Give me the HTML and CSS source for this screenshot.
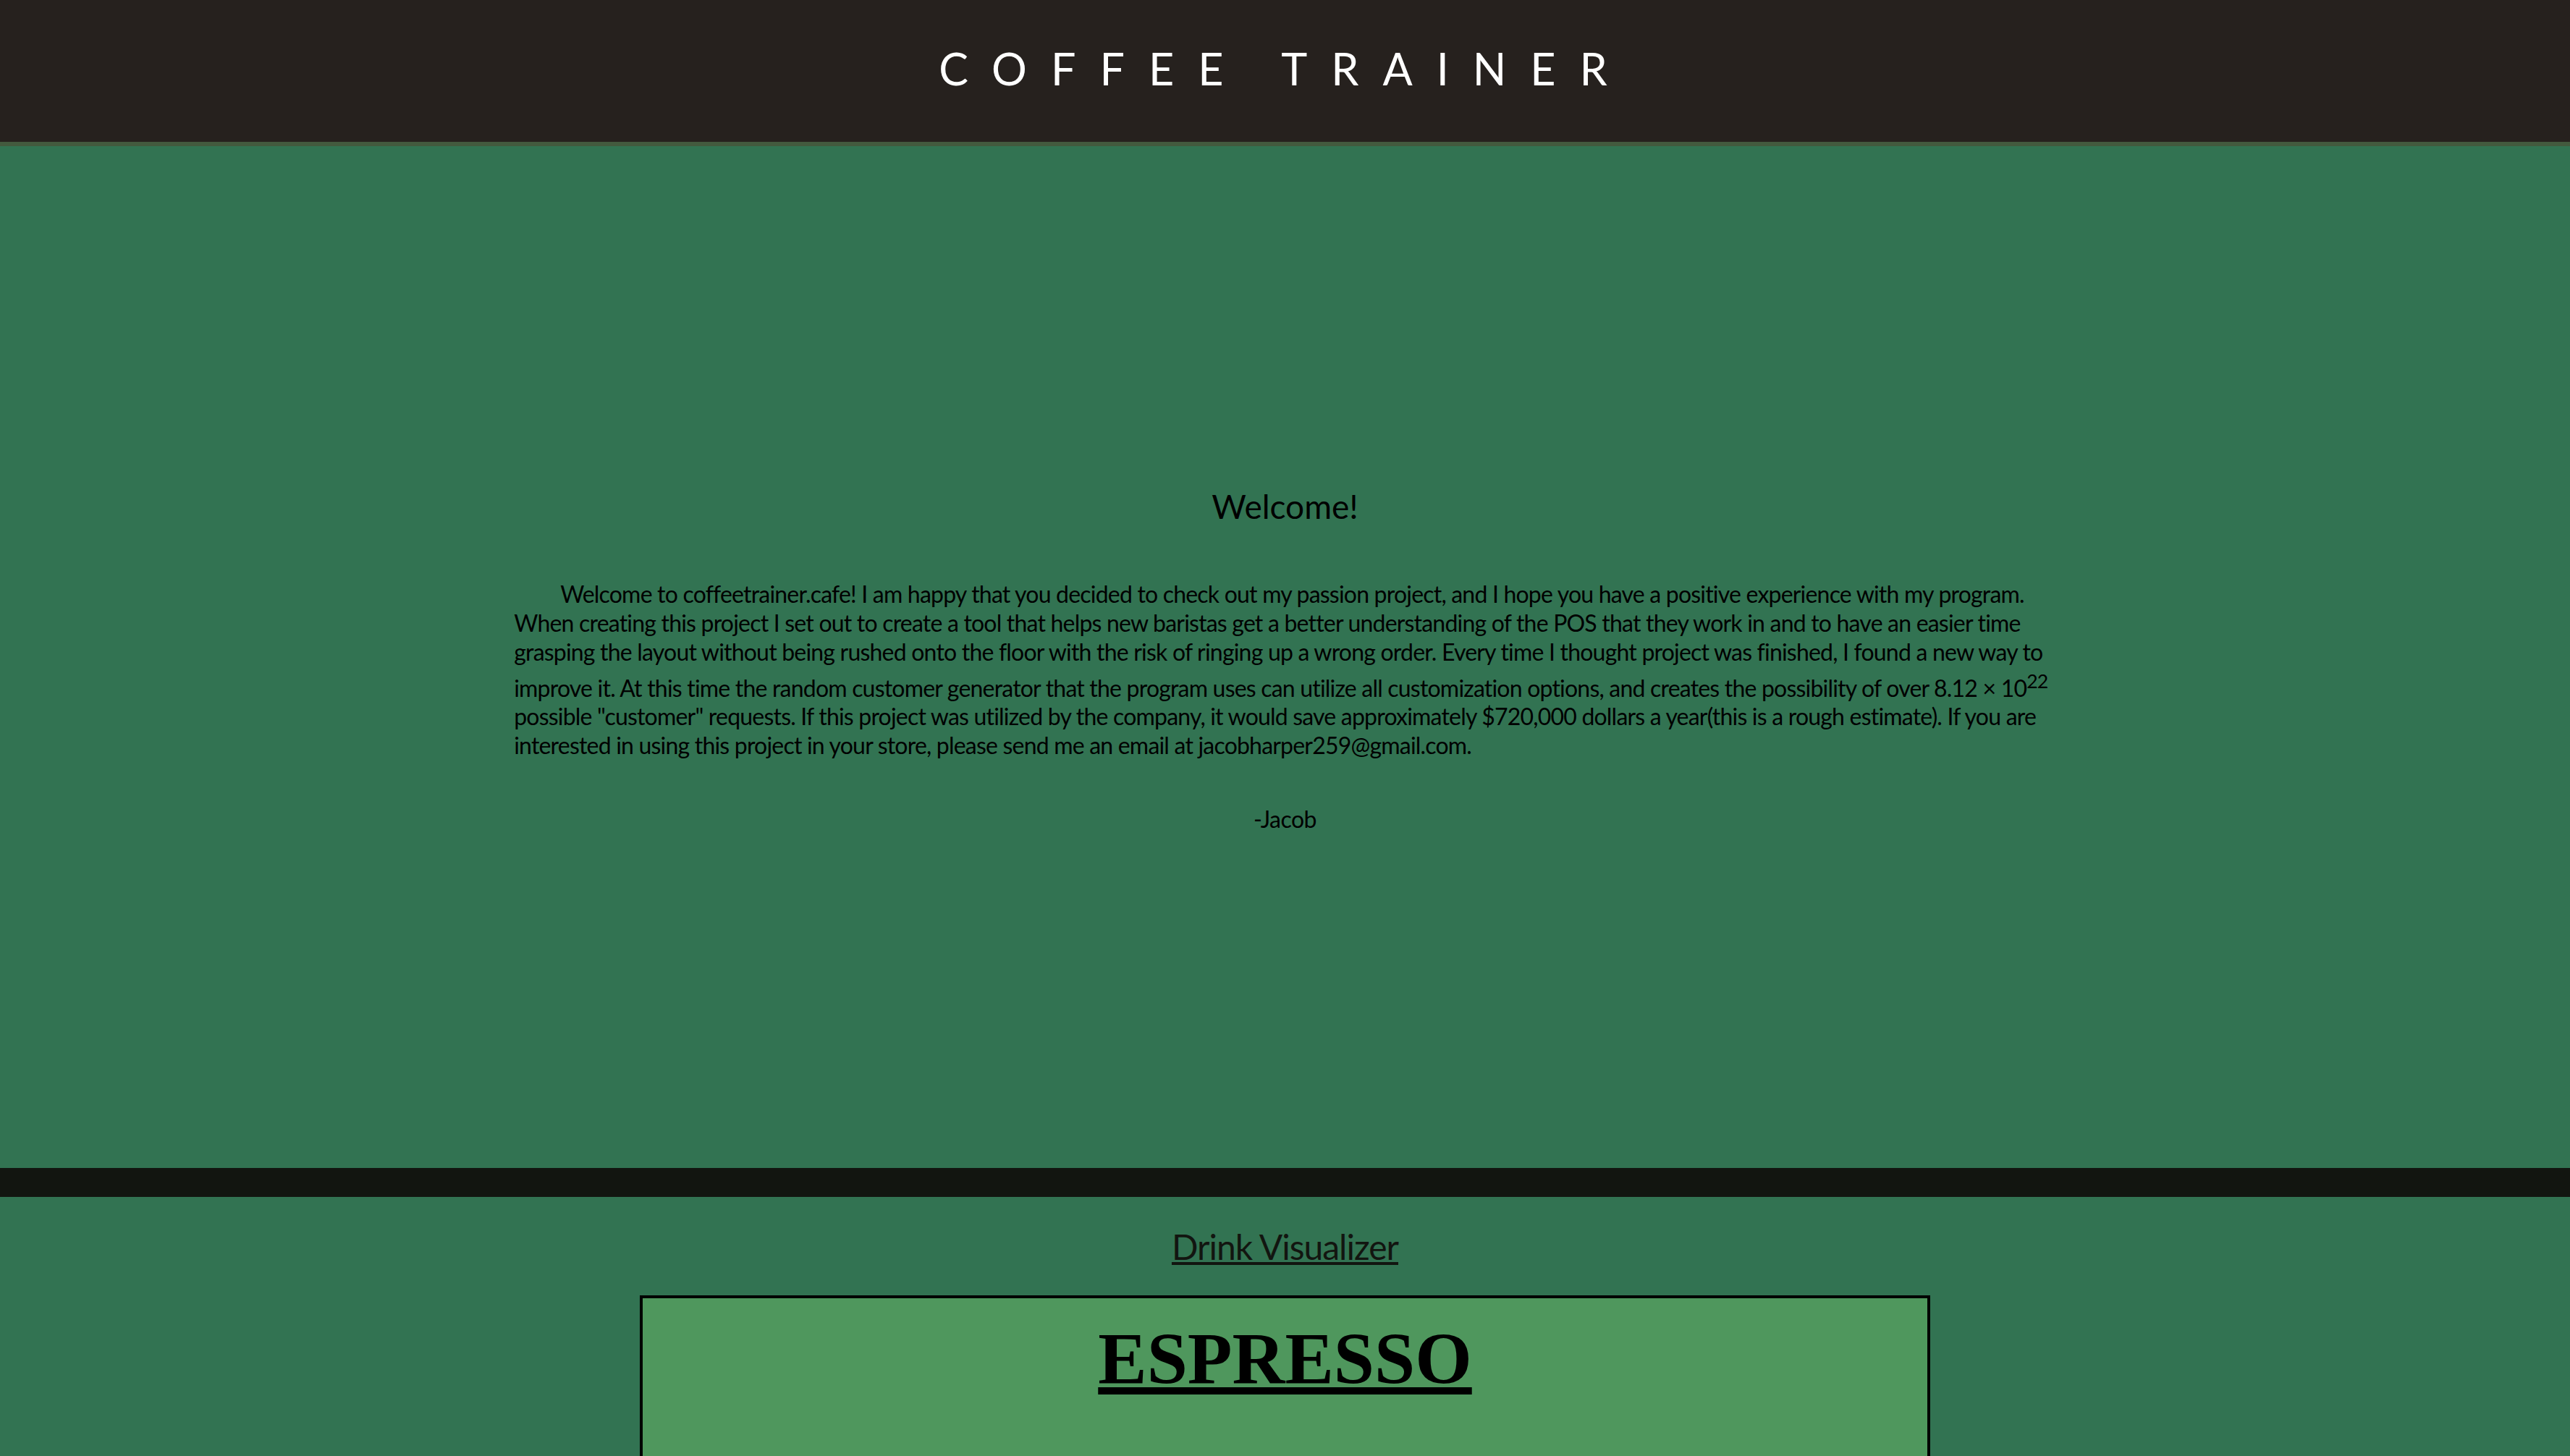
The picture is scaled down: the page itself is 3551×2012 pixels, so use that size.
FILE: index.html
```html
<!DOCTYPE html>
<html>
<head>
<meta charset="utf-8">
<title>Coffee Trainer</title>
<link rel="stylesheet" href="styles.css">
</head>
<body>
<header class="topbar">
  <h1 class="brand">COFFEE TRAINER</h1>
</header>
<main class="welcome">
  <h2 class="welcome-title">Welcome!</h2>
  <p class="welcome-text">Welcome to coffeetrainer.cafe! I am happy that you decided to check out my passion project, and I hope you have a positive experience with my program. When creating this project I set out to create a tool that helps new baristas get a better understanding of the POS that they work in and to have an easier time grasping the layout without being rushed onto the floor with the risk of ringing up a wrong order. Every time I thought project was finished, I found a new way to improve it. At this time the random customer generator that the program uses can utilize all customization options, and creates the possibility of over 8.12 × 10<sup>22</sup> possible "customer" requests. If this project was utilized by the company, it would save approximately $720,000 dollars a year(this is a rough estimate). If you are interested in using this project in your store, please send me an email at jacobharper259@gmail.com.</p>
  <p class="signature">-Jacob</p>
</main>
<section class="visualizer">
  <h2 class="visualizer-title">Drink Visualizer</h2>
  <div class="drink-card">
    <h3 class="drink-name">ESPRESSO</h3>
  </div>
</section>
</body>
</html>
```
FILE: styles.css
```css
html, body {
  margin: 0;
  padding: 0;
}
body {
  background: #327352;
  font-family: Lato, "Open Sans", sans-serif;
  color: #000;
}
.topbar {
  background: #26211e;
  height: 188px;
  padding-bottom: 8px;
  border-bottom: 6px solid #435a3e;
  display: flex;
  align-items: center;
  justify-content: center;
}
.brand {
  margin: 0;
  color: #fff;
  font-family: Lato, sans-serif;
  font-weight: 400;
  font-size: 61px;
  letter-spacing: 33px;
}
.welcome {
  box-sizing: border-box;
  height: 1412px;
  padding-top: 8px;
  display: flex;
  flex-direction: column;
  align-items: center;
  justify-content: center;
}
.welcome-title {
  margin: 0 0 74px;
  font-size: 46px;
  font-weight: 400;
}
.welcome-text {
  width: 60%;
  margin: 0;
  font-size: 32px;
  line-height: 40px;
  letter-spacing: -0.8px;
  text-indent: 64px;
}
.signature {
  margin: 62px 0 0;
  font-size: 32px;
  line-height: 40px;
  letter-spacing: -0.5px;
}
.visualizer {
  border-top: 40px solid #121510;
  display: flex;
  flex-direction: column;
  align-items: center;
  padding-top: 40px;
  padding-bottom: 200px;
}
.visualizer-title {
  margin: 0 0 39px;
  font-size: 48px;
  font-weight: 400;
  letter-spacing: -1px;
  color: #121510;
  text-decoration: underline;
}
.drink-card {
  width: 50%;
  border: 4px solid #000;
  background: #4f975d;
  min-height: 600px;
  display: flex;
  flex-direction: column;
  align-items: center;
}
.drink-name {
  margin: 26px 0 0;
  font-family: "Liberation Serif", serif;
  font-weight: 700;
  font-size: 101px;
  text-decoration: underline;
  text-decoration-thickness: 10px;
  text-underline-offset: 5px;
}
```
